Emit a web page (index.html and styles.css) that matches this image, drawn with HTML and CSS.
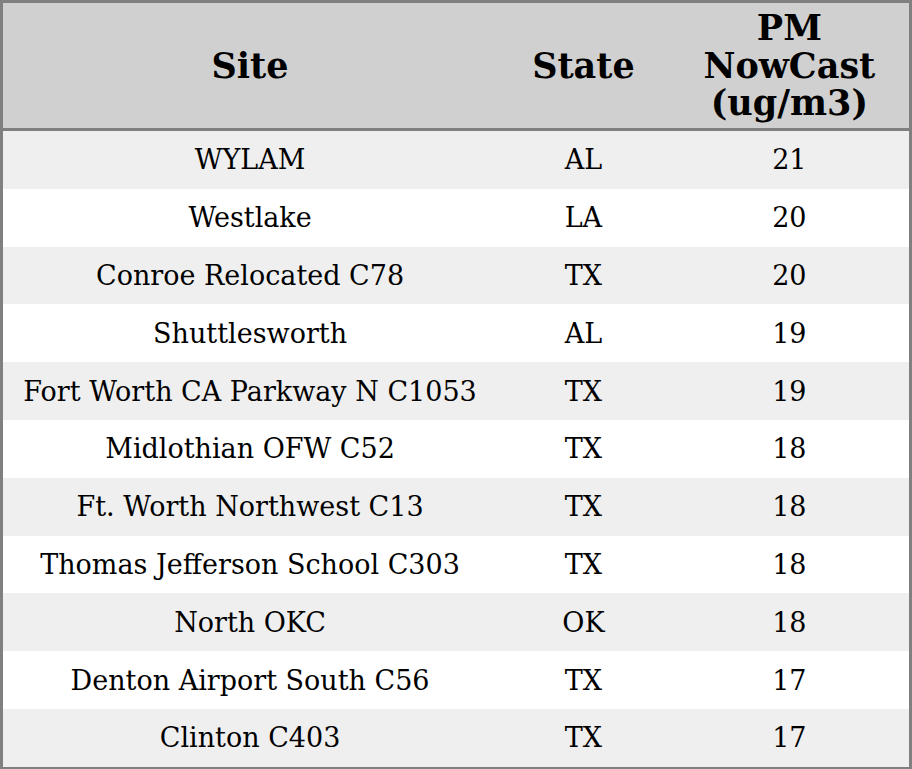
FILE: index.html
```html
<!DOCTYPE html>
<html>
<head>
<meta charset="utf-8">
<link rel="stylesheet" href="styles.css">
</head>
<body>
<table class="aq">
  <colgroup>
    <col class="c-site">
    <col class="c-state">
    <col class="c-pm">
  </colgroup>
  <thead>
    <tr><th>Site</th><th>State</th><th>PM<br>NowCast<br>(ug/m3)</th></tr>
  </thead>
  <tbody>
    <tr><td>WYLAM</td><td>AL</td><td>21</td></tr>
    <tr><td>Westlake</td><td>LA</td><td>20</td></tr>
    <tr><td>Conroe Relocated C78</td><td>TX</td><td>20</td></tr>
    <tr><td>Shuttlesworth</td><td>AL</td><td>19</td></tr>
    <tr><td>Fort Worth CA Parkway N C1053</td><td>TX</td><td>19</td></tr>
    <tr><td>Midlothian OFW C52</td><td>TX</td><td>18</td></tr>
    <tr><td>Ft. Worth Northwest C13</td><td>TX</td><td>18</td></tr>
    <tr><td>Thomas Jefferson School C303</td><td>TX</td><td>18</td></tr>
    <tr><td>North OKC</td><td>OK</td><td>18</td></tr>
    <tr><td>Denton Airport South C56</td><td>TX</td><td>17</td></tr>
    <tr><td>Clinton C403</td><td>TX</td><td>17</td></tr>
  </tbody>
</table>
</body>
</html>
```
FILE: styles.css
```css
html, body {
  margin: 0;
  padding: 0;
  background: #ffffff;
}
.aq {
  width: 912px;
  height: 769px;
  border-collapse: collapse;
  border: 3px solid #808080;
  font-family: "DejaVu Serif", serif;
  color: #000;
  table-layout: fixed;
}
.c-site { width: 494px; }
.c-state { width: 172px; }
.c-pm { width: 240px; }
.aq th {
  background: #d0d0d0;
  font-size: 35px;
  font-weight: bold;
  line-height: 37.5px;
  padding: 6px 0;
  height: 113px;
  text-align: center;
  border-bottom: 3px solid #808080;
}
.aq td {
  font-size: 27px;
  text-align: center;
  padding: 0;
  height: 57.8px;
}
.aq tbody tr:nth-child(odd) td {
  background: #efefef;
}
```
